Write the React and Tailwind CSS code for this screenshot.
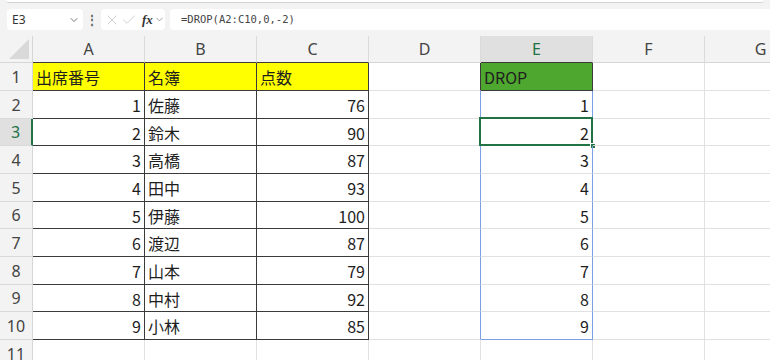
import { ChevronDown, X, Check } from 'lucide-react';

const COLS = ['A', 'B', 'C', 'D', 'E', 'F', 'G'];
const ROW_H = [28, 28, 27, 28, 28, 27, 28, 28, 27, 28, 28];

const data = [
  ['出席番号', '名簿', '点数'],
  [1, '佐藤', 76],
  [2, '鈴木', 90],
  [3, '高橋', 87],
  [4, '田中', 93],
  [5, '伊藤', 100],
  [6, '渡辺', 87],
  [7, '山本', 79],
  [8, '中村', 92],
  [9, '小林', 85],
];

const GRID = 'border-[#e1e1e1]';
const DARK = 'border-[#3a3a3a]';

const cellFont = { fontFamily: '"Noto Sans CJK JP", "Noto Sans", sans-serif' };

const FormulaBar = () => (
  <div className="h-[36px] bg-[#f3f3f3]">
    <div className="mx-[6px] h-[3px] rounded-b-[4px] border-b border-[#d4d4d4] bg-white" />
    <div className="mt-[6px] flex h-[21px] items-center">
      <div className="ml-[7px] flex h-[21px] w-[76px] items-center justify-between rounded-[4px] bg-white pl-[5px] pr-[3px] text-[12px] text-[#333]">
        <span>E3</span>
        <ChevronDown className="h-[12px] w-[12px] text-[#555]" strokeWidth={1.6} />
      </div>
      <div className="flex w-[18px] justify-center text-[12px] font-bold text-[#666]">⋮</div>
      <div className="flex h-[21px] w-[64px] items-center rounded-[4px] bg-white pl-[3px]">
        <X className="h-[16px] w-[16px] text-[#c4c4c4]" strokeWidth={1.2} />
        <Check className="ml-[1px] h-[16px] w-[16px] text-[#c4c4c4]" strokeWidth={1.2} />
        <span
          className="ml-[5px] text-[13px] font-bold italic text-[#333]"
          style={{ fontFamily: '"Liberation Serif", serif' }}
        >
          fx
        </span>
        <ChevronDown className="ml-[1px] h-[11px] w-[11px] text-[#777]" strokeWidth={1.5} />
      </div>
      <div
        className="ml-[5px] flex h-[21px] flex-1 items-center rounded-l-[4px] bg-white pl-[11px] text-[10.5px] text-[#444]"
        style={{ fontFamily: '"DejaVu Sans Mono", monospace' }}
      >
        =DROP(A2:C10,0,-2)
      </div>
    </div>
  </div>
);

const HeaderRow = () => (
  <div className="flex h-[27px] bg-[#f3f3f3]" style={{ fontFamily: '"Noto Sans", sans-serif' }}>
    <div className="relative h-full w-[33px] shrink-0 border-r border-b border-[#d6d6d6]">
      <div
        className="absolute right-[3px] bottom-[3px] h-[20px] w-[20px] bg-[#d9d9d9]"
        style={{ clipPath: 'polygon(100% 0, 100% 100%, 0 100%)' }}
      />
    </div>
    {COLS.map((c, i) => {
      const sel = c === 'E';
      const dark = i <= 2 || sel;
      return (
        <div
          key={c}
          className={`flex h-full w-[112px] shrink-0 items-center justify-center border-r border-b text-[16px] ${
            sel ? 'bg-[#e0e0e0] text-[#217346]' : 'text-[#444]'
          } ${dark ? 'border-b-[#3a3a3a]' : 'border-b-[#d6d6d6]'} border-r-[#dadada]`}
        >
          {c}
        </div>
      );
    })}
  </div>
);

const Cell = ({ className, children, align = 'left', selected }) => (
  <div
    className={`relative flex h-full w-[112px] shrink-0 items-center border-r border-b px-[3px] pt-[1px] text-[16px] text-[#1e1e1e] ${
      align === 'right' ? 'justify-end' : 'justify-start'
    } ${className}`}
    style={cellFont}
  >
    {children}
    {selected && (
      <>
        <div className="absolute top-[-2px] right-[-1px] bottom-[-1px] left-[-2px] border-2 border-[#217346]" />
        <div className="absolute right-[-4px] bottom-[-4px] h-[6px] w-[6px] border border-white bg-[#217346]" />
      </>
    )}
  </div>
);

const Row = ({ r }) => {
  const n = r + 1;
  const inTable = r < 10;
  const rowData = data[r];
  const isHead = r === 0;
  const selRow = n === 3;
  return (
    <div className="flex" style={{ height: ROW_H[r] }}>
      <div
        className={`flex h-full w-[33px] shrink-0 items-center justify-center border-b border-b-[#dadada] text-[16px] ${
          selRow ? 'border-r-2 border-r-[#217346] bg-[#e0e0e0] text-[#217346]' : 'border-r border-r-[#d6d6d6] bg-[#f3f3f3] text-[#444]'
        }`}
        style={{ fontFamily: '"Noto Sans", sans-serif' }}
      >
        {n}
      </div>
      {[0, 1, 2].map((c) => {
        const v = rowData ? rowData[c] : '';
        const num = typeof v === 'number';
        return (
          <Cell
            key={c}
            align={num ? 'right' : 'left'}
            className={
              inTable
                ? `${DARK} ${isHead ? 'bg-[#ffff00]' : 'bg-white'}`
                : GRID
            }
          >
            {v}
          </Cell>
        );
      })}
      {/* D */}
      <Cell
        className={`${GRID} ${
          isHead ? 'border-r-[#3a3a3a]' : n <= 10 ? 'border-r-[#7aa0e2]' : ''
        }`}
      />
      {/* E */}
      {isHead ? (
        <Cell className={`${DARK} bg-[#4ea72e]`}>DROP</Cell>
      ) : n <= 10 ? (
        <Cell
          align="right"
          selected={n === 3}
          className={`border-r-[#7aa0e2] ${n === 10 ? 'border-b-[#7aa0e2]' : 'border-b-[#e1e1e1]'}`}
        >
          {r}
        </Cell>
      ) : (
        <Cell className={GRID} />
      )}
      <Cell className={GRID} />
      <Cell className={GRID} />
    </div>
  );
};

export default function App() {
  return (
    <div className="h-[360px] w-[770px] overflow-hidden bg-white">
      <FormulaBar />
      <HeaderRow />
      {ROW_H.map((_, r) => (
        <Row key={r} r={r} />
      ))}
    </div>
  );
}
